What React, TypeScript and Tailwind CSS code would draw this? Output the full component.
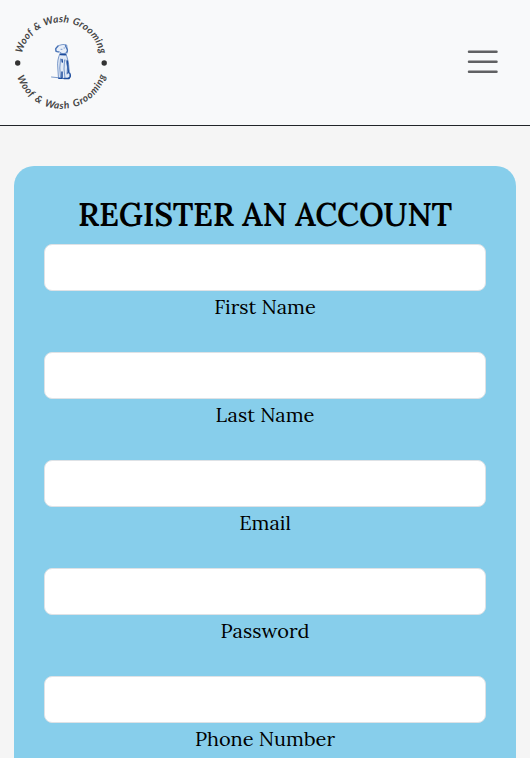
const fields = ["First Name", "Last Name", "Email", "Password", "Phone Number"];

function Logo() {
  return (
    <svg width="122" height="125" viewBox="0 0 122 125" aria-label="Woof & Wash Grooming">
      <defs>
        <path id="top" d="M22 52.8A40 40 0 0 1 100 52.8L102 60" transform="translate(0 .7)" />
        <path id="bottom" d="M17.2 77A46.3 46.3 0 0 0 105.2 77L107.5 70" />
      </defs>
      <g fill="#444" fontSize="10" fontFamily="Lato, sans-serif" fontStyle="italic" fontWeight="700">
        <text letterSpacing="0.25" wordSpacing="0.7">
          <textPath href="#top">Woof &amp; Wash Grooming</textPath>
        </text>
        <text letterSpacing="0.66" wordSpacing="1.2">
          <textPath href="#bottom">Woof &amp; Wash Grooming</textPath>
        </text>
      </g>
      <circle cx="17.7" cy="63" r="2.7" fill="#333" />
      <circle cx="104.2" cy="63" r="2.7" fill="#333" />
      <g fill="none" stroke="#4570b4" strokeWidth="0.7" strokeLinecap="round" strokeLinejoin="round">
        <path fill="#e3ebf7" d="M60 53.5C58 58 57.2 62 57.8 68L58.5 78.5H69C70.8 76 69.5 72 69 69C68.8 63 67.5 58 66 54Z" />
        <path fill="#e8eff9" d="M58 46C60 44.8 64 43.8 66.7 45L67.5 51C66 54 61.5 54.5 60 52L56.3 51.5L55.5 49.5Z" />
        <path strokeWidth="1.2" d="M58 46L55.8 48.5L56 51.5L58.5 52M65.3 45.5L67.5 50L66.8 53" />
        <path strokeWidth="1.5" stroke="#1c4b9c" d="M60.5 54.5L65.5 54.8M62 59.5L62.3 62M62 72V78M59 78.3H62M64 78.5H69M67.3 61L68.3 72" />
        <path d="M60.5 59L59.8 68L60.5 77M64.5 60L64 69L65 78M66 60L67.5 67L67 74M61 49.3H62M64 48H64.5M51.5 77L58 77.7" />
        <path strokeWidth="1.2" stroke="#1c4b9c" d="M67.5 73C71 71.5 71.5 78 68 78.3" />
      </g>
    </svg>
  );
}

export default function App() {
  return (
    <div className="h-[758px] overflow-hidden bg-[#f5f5f5] font-['Lora','Liberation_Serif',serif] text-black">
      <header className="flex h-[126px] items-start justify-between border-b border-[#212529] bg-[#f8f9fa]">
        <Logo />
        <button aria-label="Toggle navigation" className="mt-[43px] mr-[29px]">
          <svg width="37.5" height="37.5" viewBox="0 0 30 30" fill="none" stroke="#606163" strokeWidth="2" strokeLinecap="round">
            <path d="M4 7h22M4 15h22M4 23h22" />
          </svg>
        </button>
      </header>
      <main className="px-3.5 pt-10">
        <form className="h-[640px] rounded-t-[20px] bg-[#87ceeb] px-[30px] pt-[30px] text-center">
          <h1 className="h-12 text-[32px] leading-[37px] font-semibold tracking-[-0.29px] whitespace-nowrap">REGISTER AN ACCOUNT</h1>
          {fields.map((label) => (
            <div key={label} className="flex h-[108px] flex-col">
              <input aria-label={label} className="h-[47px] w-full shrink-0 rounded-lg border border-[#dee2e6] bg-white px-4 outline-none" />
              <label className="mt-px text-xl leading-[30px]">{label}</label>
            </div>
          ))}
        </form>
      </main>
    </div>
  );
}
